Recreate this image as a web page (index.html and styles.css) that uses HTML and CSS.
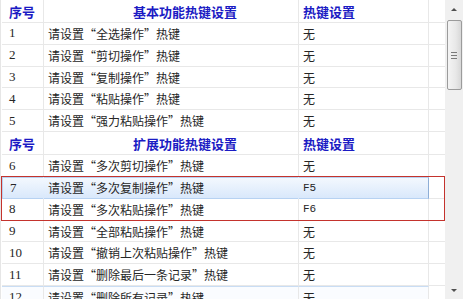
FILE: index.html
```html
<!DOCTYPE html>
<html lang="zh-CN">
<head>
<meta charset="utf-8">
<link rel="stylesheet" href="styles.css">
</head>
<body>
<div class="window">
  <div class="grid">
    <div class="row head"><div class="c c1">序号</div><div class="c c2">基本功能热键设置</div><div class="c c3">热键设置</div><div class="c c4"></div></div>
    <div class="row"><div class="c c1 num">1</div><div class="c c2">请设置<q class="o">“</q>全选操作<q class="e">”</q>热键</div><div class="c c3">无</div><div class="c c4"></div></div>
    <div class="row"><div class="c c1 num">2</div><div class="c c2">请设置<q class="o">“</q>剪切操作<q class="e">”</q>热键</div><div class="c c3">无</div><div class="c c4"></div></div>
    <div class="row"><div class="c c1 num">3</div><div class="c c2">请设置<q class="o">“</q>复制操作<q class="e">”</q>热键</div><div class="c c3">无</div><div class="c c4"></div></div>
    <div class="row"><div class="c c1 num">4</div><div class="c c2">请设置<q class="o">“</q>粘贴操作<q class="e">”</q>热键</div><div class="c c3">无</div><div class="c c4"></div></div>
    <div class="row"><div class="c c1 num">5</div><div class="c c2">请设置<q class="o">“</q>强力粘贴操作<q class="e">”</q>热键</div><div class="c c3">无</div><div class="c c4"></div></div>
    <div class="row head"><div class="c c1">序号</div><div class="c c2">扩展功能热键设置</div><div class="c c3">热键设置</div><div class="c c4"></div></div>
    <div class="row"><div class="c c1 num">6</div><div class="c c2">请设置<q class="o">“</q>多次剪切操作<q class="e">”</q>热键</div><div class="c c3">无</div><div class="c c4"></div></div>
    <div class="row sel"><div class="c c1 num">7</div><div class="c c2">请设置<q class="o">“</q>多次复制操作<q class="e">”</q>热键</div><div class="c c3 key">F5</div><div class="c c4"></div></div>
    <div class="row"><div class="c c1 num">8</div><div class="c c2">请设置<q class="o">“</q>多次粘贴操作<q class="e">”</q>热键</div><div class="c c3 key">F6</div><div class="c c4"></div></div>
    <div class="row"><div class="c c1 num">9</div><div class="c c2">请设置<q class="o">“</q>全部粘贴操作<q class="e">”</q>热键</div><div class="c c3">无</div><div class="c c4"></div></div>
    <div class="row"><div class="c c1 num">10</div><div class="c c2">请设置<q class="o">“</q>撤销上次粘贴操作<q class="e">”</q>热键</div><div class="c c3">无</div><div class="c c4"></div></div>
    <div class="row"><div class="c c1 num">11</div><div class="c c2">请设置<q class="o">“</q>删除最后一条记录<q class="e">”</q>热键</div><div class="c c3">无</div><div class="c c4"></div></div>
    <div class="row hover"><div class="c c1 num">12</div><div class="c c2">请设置<q class="o">“</q>删除所有记录<q class="e">”</q>热键</div><div class="c c3">无</div><div class="c c4"></div></div>
  </div>
  <div class="scroll">
    <div class="arrow up"></div>
    <div class="thumb"><span></span><span></span><span></span></div>
    <div class="track"></div>
    <div class="arrow down"></div>
  </div>
  <div class="mark"></div>
</div>
</body>
</html>
```

FILE: styles.css
```css
html, body {
  margin: 0;
  padding: 0;
  background: #ffffff;
}

.window {
  position: relative;
  width: 463px;
  height: 299px;
  overflow: hidden;
  display: flex;
}

.grid {
  width: 445px;
  flex: none;
  border-left: 1px solid #e6e6e6;
  box-sizing: border-box;
  padding-left: 1px;
}

.row {
  display: grid;
  grid-template-columns: 42px 255px 130px 16px;
  height: 21.83px;
}

.row.head {
  height: 23px;
}

.c {
  box-sizing: border-box;
  border-right: 1px solid #e8e8e8;
  border-bottom: 1px solid #e8e8e8;
  display: flex;
  align-items: center;
  font-family: "Noto Sans CJK SC", sans-serif;
  font-size: 12px;
  color: #262626;
  white-space: nowrap;
  overflow: hidden;
}

.c1 { padding-left: 7px; }
.c2 { padding-left: 4px; }
.c3 { padding-left: 4px; }
.c4 { border-right: none; }

.num {
  font-family: "Liberation Serif", serif;
  font-size: 13px;
}

.c.key {
  font-family: "Liberation Mono", monospace;
  font-size: 11px;
}

q {
  quotes: none;
  display: inline-block;
  width: 12px;
}

q.o { text-align: right; }
q.e { text-align: left; }

.head .c {
  font-weight: 700;
  font-size: 13px;
  color: #1b1bc4;
}

.head .c2 {
  padding-left: 89px;
}

.sel .c1, .sel .c2, .sel .c3 {
  background: linear-gradient(#f3f8fe, #d9e8fb);
  border-top: 1px solid #b7d2f2;
  border-bottom: 1px solid #b7d2f2;
  border-right-color: transparent;
}

.sel .c3 {
  border-right: 1px solid #8eaed6;
}

.sel .c1 {
  border-left: 1px solid #b7d2f2;
}

.hover .c1, .hover .c2, .hover .c3 {
  border-top: 1px solid #c9ddf4;
  background: #fafcff;
}

.scroll {
  width: 18px;
  flex: none;
  background: #f0f0f0;
  display: flex;
  flex-direction: column;
  align-items: center;
}

.arrow {
  height: 17px;
  width: 18px;
  flex: none;
  position: relative;
}

.arrow::after {
  content: "";
  position: absolute;
  left: 6px;
  width: 0;
  height: 0;
  border-left: 3px solid transparent;
  border-right: 3px solid transparent;
}

.up::after {
  top: 8px;
  border-bottom: 3px solid #505050;
}

.down::after {
  top: 7px;
  border-top: 3px solid #505050;
}

.thumb {
  margin-top: 3px;
  width: 15px;
  height: 70px;
  box-sizing: border-box;
  border: 1px solid #9b9b9b;
  border-radius: 2px;
  background: linear-gradient(90deg, #f4f4f4, #e8e8e8 60%, #d8d8d8);
  display: flex;
  flex-direction: column;
  align-items: center;
  justify-content: center;
  gap: 2px;
}

.thumb span {
  display: block;
  width: 6px;
  height: 1px;
  background: #7a7a7a;
}

.track {
  flex: 1;
}

.mark {
  position: absolute;
  left: 1px;
  top: 176px;
  width: 444px;
  height: 45px;
  box-sizing: border-box;
  border: 1px solid #c4332d;
}
```
